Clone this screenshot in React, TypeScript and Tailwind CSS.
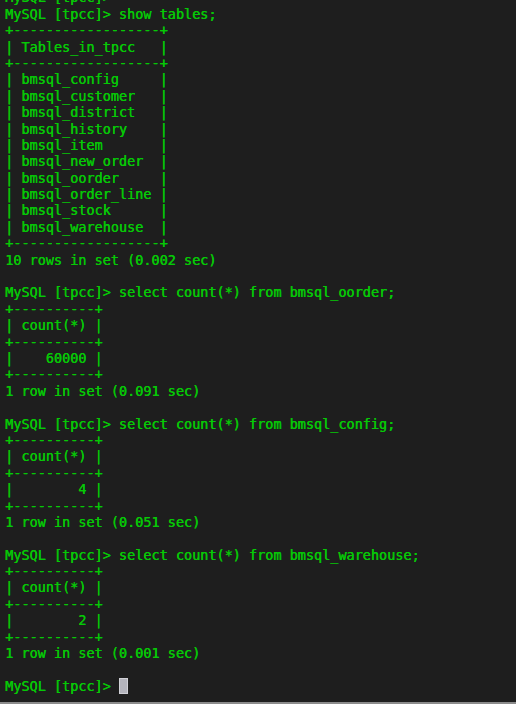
import React from 'react';

const lines = [
  'MySQL [tpcc]>',
  'MySQL [tpcc]> show tables;',
  '+------------------+',
  '| Tables_in_tpcc   |',
  '+------------------+',
  '| bmsql_config     |',
  '| bmsql_customer   |',
  '| bmsql_district   |',
  '| bmsql_history    |',
  '| bmsql_item       |',
  '| bmsql_new_order  |',
  '| bmsql_oorder     |',
  '| bmsql_order_line |',
  '| bmsql_stock      |',
  '| bmsql_warehouse  |',
  '+------------------+',
  '10 rows in set (0.002 sec)',
  '',
  'MySQL [tpcc]> select count(*) from bmsql_oorder;',
  '+----------+',
  '| count(*) |',
  '+----------+',
  '|    60000 |',
  '+----------+',
  '1 row in set (0.091 sec)',
  '',
  'MySQL [tpcc]> select count(*) from bmsql_config;',
  '+----------+',
  '| count(*) |',
  '+----------+',
  '|        4 |',
  '+----------+',
  '1 row in set (0.051 sec)',
  '',
  'MySQL [tpcc]> select count(*) from bmsql_warehouse;',
  '+----------+',
  '| count(*) |',
  '+----------+',
  '|        2 |',
  '+----------+',
  '1 row in set (0.001 sec)',
  '',
];

export default function App() {
  return (
    <div className="w-[516px] h-[704px] overflow-hidden bg-[#1e1e1e] flex flex-col">
      <div
        className="flex-1 overflow-hidden pl-[5px] text-[#06c806] text-[13.5px] leading-[16.4px] [text-shadow:0.45px_0_0_#06c806]"
        style={{ fontFamily: '"DejaVu Sans Mono", "Liberation Mono", monospace' }}
      >
        <div className="mt-[-10.6px]">
          {lines.map((l, i) => (
            <div key={i} className="whitespace-pre h-[16.4px]">
              {l}
            </div>
          ))}
          <div className="whitespace-pre h-[16.4px] flex items-center">
            <span>MySQL [tpcc]&gt; </span>
            <span className="inline-block w-[9px] h-[16px] bg-[#b4b4bc] border border-[#d0d0d6]" />
          </div>
        </div>
      </div>
      <div className="h-[2px] bg-[#8c8c8c]" />
    </div>
  );
}
